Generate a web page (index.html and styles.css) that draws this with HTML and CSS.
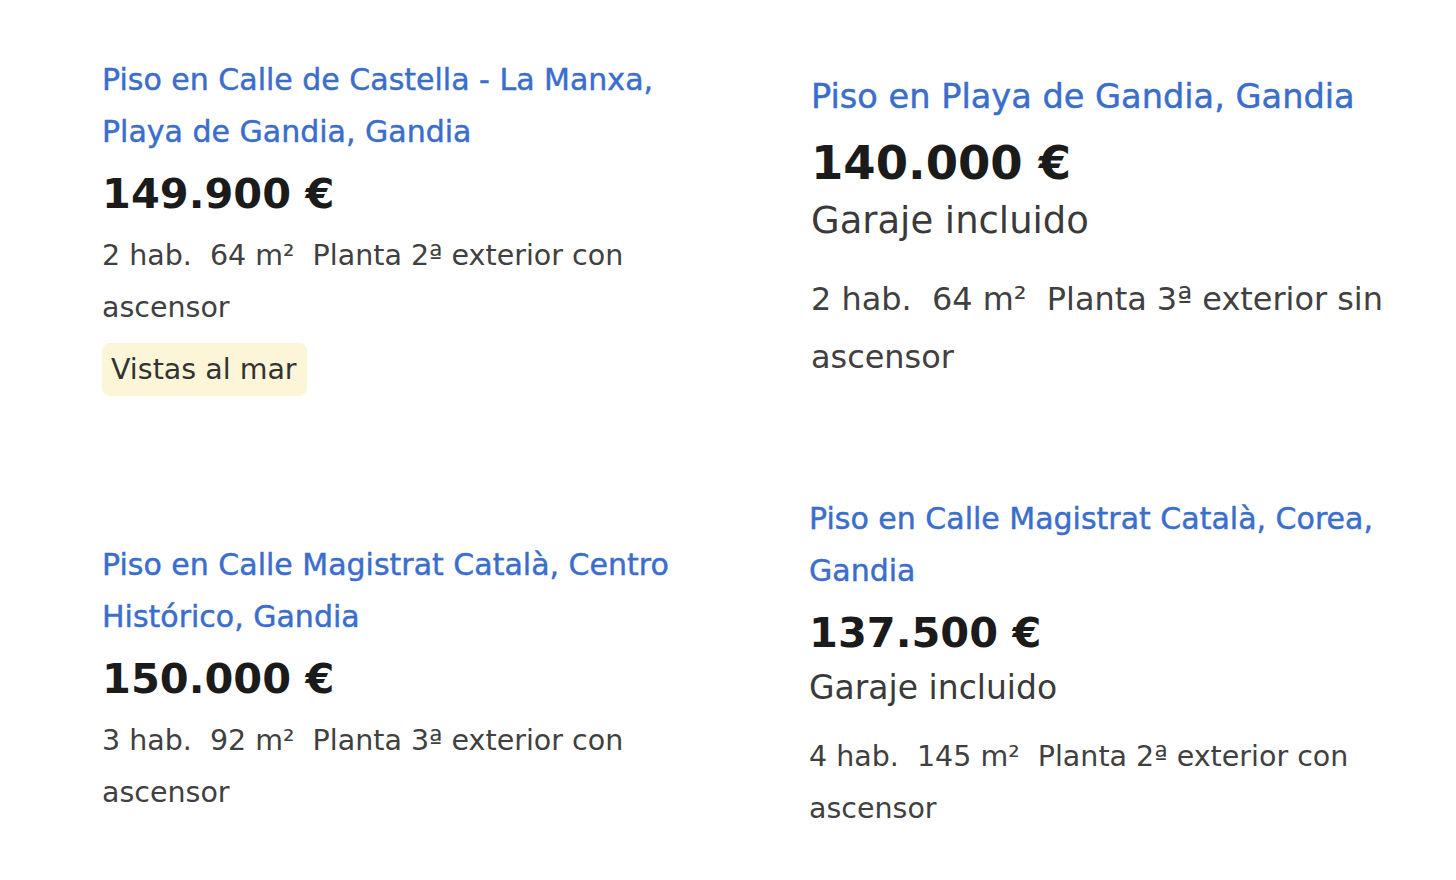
FILE: index.html
```html
<!DOCTYPE html>
<html lang="es">
<head>
<meta charset="utf-8">
<title>Pisos en Gandia</title>
<link rel="stylesheet" href="styles.css">
</head>
<body>
<main class="listings">
  <article class="card card--tl">
    <a class="card__title" href="#">Piso en Calle de Castella - La Manxa, Playa de Gandia, Gandia</a>
    <div class="card__price">149.900 €</div>
    <p class="card__details">2 hab.&nbsp; 64 m²&nbsp; Planta 2ª exterior con ascensor</p>
    <span class="card__tag">Vistas al mar</span>
  </article>
  <article class="card card--tr card--large">
    <a class="card__title" href="#">Piso en Playa de Gandia, Gandia</a>
    <div class="card__price">140.000 €</div>
    <div class="card__extra">Garaje incluido</div>
    <p class="card__details">2 hab.&nbsp; 64 m²&nbsp; Planta 3ª exterior sin ascensor</p>
  </article>
  <article class="card card--bl">
    <a class="card__title" href="#">Piso en Calle Magistrat Català, Centro Histórico, Gandia</a>
    <div class="card__price">150.000 €</div>
    <p class="card__details">3 hab.&nbsp; 92 m²&nbsp; Planta 3ª exterior con ascensor</p>
  </article>
  <article class="card card--br">
    <a class="card__title" href="#">Piso en Calle Magistrat Català, Corea, Gandia</a>
    <div class="card__price">137.500 €</div>
    <div class="card__extra">Garaje incluido</div>
    <p class="card__details">4 hab.&nbsp; 145 m²&nbsp; Planta 2ª exterior con ascensor</p>
  </article>
</main>
</body>
</html>
```
FILE: styles.css
```css
html, body {
  margin: 0;
  padding: 0;
  background: #ffffff;
}

body {
  font-family: "DejaVu Sans", "Open Sans", sans-serif;
  color: #333333;
  width: 1456px;
  height: 880px;
  overflow: hidden;
}

.listings {
  display: grid;
  grid-template-columns: 708px 640px;
  grid-template-rows: 480px auto;
  padding-left: 102px;
}

.card {
  --s: 1;
  display: flex;
  flex-direction: column;
  align-items: flex-start;
  width: calc(600px * var(--s));
}

.card--large {
  --s: 1.12;
}

.card--tl { margin-top: 54px; }
.card--tr { margin-top: 68px; margin-left: 1px; }
.card--bl { margin-top: 59px; }
.card--br { margin-top: 13px; margin-left: -1px; }

.card__title {
  font-size: calc(30px * var(--s));
  line-height: calc(52px * var(--s));
  font-weight: 400;
  -webkit-text-stroke: 0.45px currentColor;
  color: #3a6dcc;
  text-decoration: none;
}

.card__price {
  font-size: calc(41.5px * var(--s));
  line-height: 72px;
  font-weight: 700;
  color: #1b1b1b;
}

.card--large .card__price {
  line-height: 74px;
}

.card__extra {
  font-size: calc(33px * var(--s));
  line-height: calc(38px * var(--s));
  color: #3a3a3a;
  margin-bottom: calc(24px * var(--s));
}

.card__details {
  margin: 0;
  font-size: calc(28.5px * var(--s));
  line-height: calc(52px * var(--s));
  color: #404040;
}

.card__tag {
  margin-top: 9px;
  background: #fdf5d8;
  border-radius: 8px;
  padding: 0 10px 0 9px;
  font-size: 28.5px;
  line-height: 53px;
  color: #333333;
}
```
